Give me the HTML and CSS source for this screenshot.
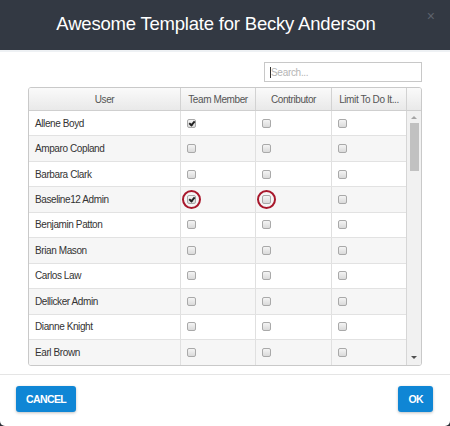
FILE: index.html
```html
<!DOCTYPE html>
<html>
<head>
<meta charset="utf-8">
<link rel="stylesheet" href="styles.css">
</head>
<body>
<div class="modal">
  <div class="header">
    <h1 class="title">Awesome Template for Becky Anderson</h1>
    <span class="close">&times;</span>
  </div>
  <div class="content">
    <div class="search-row">
      <div class="search"><span class="caret"></span><span class="ph">Search...</span></div>
    </div>
    <div class="grid">
      <div class="thead">
        <div class="th">User</div>
        <div class="th">Team Member</div>
        <div class="th">Contributor</div>
        <div class="th">Limit To Do It...</div>
        <div class="th th-sb"></div>
      </div>
      <div class="tbody">
        <div class="rows">
          <div class="row"><div class="td name">Allene Boyd</div><div class="td"><span class="cb checked"></span></div><div class="td"><span class="cb"></span></div><div class="td"><span class="cb"></span></div></div>
          <div class="row alt"><div class="td name">Amparo Copland</div><div class="td"><span class="cb"></span></div><div class="td"><span class="cb"></span></div><div class="td"><span class="cb"></span></div></div>
          <div class="row"><div class="td name">Barbara Clark</div><div class="td"><span class="cb"></span></div><div class="td"><span class="cb"></span></div><div class="td"><span class="cb"></span></div></div>
          <div class="row alt"><div class="td name">Baseline12 Admin</div><div class="td"><span class="cb checked"></span><span class="ring"></span></div><div class="td"><span class="cb"></span><span class="ring"></span></div><div class="td"><span class="cb"></span></div></div>
          <div class="row"><div class="td name">Benjamin Patton</div><div class="td"><span class="cb"></span></div><div class="td"><span class="cb"></span></div><div class="td"><span class="cb"></span></div></div>
          <div class="row alt"><div class="td name">Brian Mason</div><div class="td"><span class="cb"></span></div><div class="td"><span class="cb"></span></div><div class="td"><span class="cb"></span></div></div>
          <div class="row"><div class="td name">Carlos Law</div><div class="td"><span class="cb"></span></div><div class="td"><span class="cb"></span></div><div class="td"><span class="cb"></span></div></div>
          <div class="row alt"><div class="td name">Dellicker Admin</div><div class="td"><span class="cb"></span></div><div class="td"><span class="cb"></span></div><div class="td"><span class="cb"></span></div></div>
          <div class="row"><div class="td name">Dianne Knight</div><div class="td"><span class="cb"></span></div><div class="td"><span class="cb"></span></div><div class="td"><span class="cb"></span></div></div>
          <div class="row alt last"><div class="td name">Earl Brown</div><div class="td"><span class="cb"></span></div><div class="td"><span class="cb"></span></div><div class="td"><span class="cb"></span></div></div>
        </div>
        <div class="scrollbar">
          <div class="arrow up"></div>
          <div class="thumb"></div>
          <div class="track"></div>
          <div class="arrow down"></div>
        </div>
      </div>
    </div>
  </div>
  <div class="footer">
    <button class="btn">CANCEL</button>
    <button class="btn">OK</button>
  </div>
</div>
</body>
</html>
```
FILE: styles.css
```css
* { box-sizing: border-box; }
html { background: #2b2f36; }
body {
  margin: 0;
  font-family: "Liberation Sans", Arial, sans-serif;
  color: #333;
}
.modal {
  width: 450px;
  height: 426px;
  background: #fff;
  border-radius: 0 0 5px 5px;
  overflow: hidden;
  display: flex;
  flex-direction: column;
}
.header {
  height: 52px;
  background: #333943;
  border-bottom: 2px solid #eef1f4;
  position: relative;
  display: flex;
  align-items: center;
  justify-content: center;
  padding-right: 18px;
}
.title {
  margin: 0 0 3px 0;
  font-size: 18.5px;
  font-weight: normal;
  color: #fff;
  letter-spacing: -0.2px;
}
.close {
  position: absolute;
  right: 15px;
  top: 8px;
  color: #5d636d;
  font-size: 14px;
}
.content {
  padding: 10px 28px 0 28px;
}
.search-row {
  display: flex;
  justify-content: flex-end;
}
.search {
  width: 158px;
  height: 20px;
  border: 1px solid #c8c8c8;
  display: flex;
  align-items: center;
  padding-left: 5px;
  font-size: 10px;
  letter-spacing: -0.3px;
  color: #b5b5b5;
}
.caret {
  width: 1px;
  height: 11px;
  background: #333;
}
.grid {
  margin-top: 5px;
  border: 1px solid #c9c9c9;
  border-radius: 3px;
  overflow: hidden;
  height: 279px;
}
.thead {
  display: grid;
  grid-template-columns: 152px 75px 76px 75px 1fr;
  height: 23px;
  background: linear-gradient(#fafafa, #e9e9e9);
  border-bottom: 1px solid #cfcfcf;
}
.th {
  display: flex;
  align-items: center;
  justify-content: center;
  font-size: 10px;
  letter-spacing: -0.4px;
  color: #555;
  border-right: 1px solid #d2d2d2;
}
.th-sb { border-right: none; }
.tbody {
  display: flex;
  height: 254px;
}
.rows {
  width: 378px;
  border-right: 1px solid #d6d6d6;
}
.row {
  display: grid;
  grid-template-columns: 152px 75px 76px 75px;
  height: 25.45px;
  border-bottom: 1px solid #e2e2e2;
  background: #fff;
}
.row.alt { background: #f6f6f6; }
.row.last { border-bottom: none; }
.td {
  position: relative;
  display: flex;
  align-items: center;
  padding-left: 6px;
  border-right: 1px solid #e0e0e0;
  font-size: 10px;
  letter-spacing: -0.4px;
}
.td:last-child { border-right: none; }
.name { padding-left: 6px; color: #333; }
.cb {
  width: 9px;
  height: 9px;
  border: 1px solid #a9a9a9;
  border-radius: 2px;
  background: linear-gradient(#f4f4f4, #dadada);
  position: relative;
}
.cb.checked::after {
  content: "";
  position: absolute;
  left: 2px;
  top: 0px;
  width: 2px;
  height: 4px;
  border: solid #222;
  border-width: 0 2px 2px 0;
  transform: rotate(40deg);
}
.ring {
  position: absolute;
  left: 1px;
  top: 3px;
  width: 19px;
  height: 19px;
  border: 2px solid #a8182c;
  border-radius: 50%;
}
.scrollbar {
  flex: 1;
  background: #f1f1f1;
  display: flex;
  flex-direction: column;
  align-items: center;
}
.arrow {
  width: 0;
  height: 0;
  border-left: 3px solid transparent;
  border-right: 3px solid transparent;
}
.arrow.up {
  margin-top: 5px;
  margin-bottom: 4px;
  border-bottom: 3px solid #a5a5a5;
}
.arrow.down {
  margin-bottom: 6px;
  border-top: 3px solid #505050;
}
.thumb {
  width: 9px;
  height: 48px;
  background: #c1c1c1;
}
.track { flex: 1; }
.footer {
  margin-top: 8px;
  border-top: 1px solid #e5e5e5;
  padding: 11px 17px 0 16px;
  display: flex;
  justify-content: space-between;
}
.btn {
  height: 26px;
  border: none;
  border-radius: 3px;
  background: #0f86d5;
  color: #fff;
  font-family: "Liberation Sans", Arial, sans-serif;
  font-weight: bold;
  font-size: 10.5px;
  letter-spacing: -0.6px;
  padding: 0 10px;
  box-shadow: 0 1px 3px rgba(0,0,0,0.25);
}
```
